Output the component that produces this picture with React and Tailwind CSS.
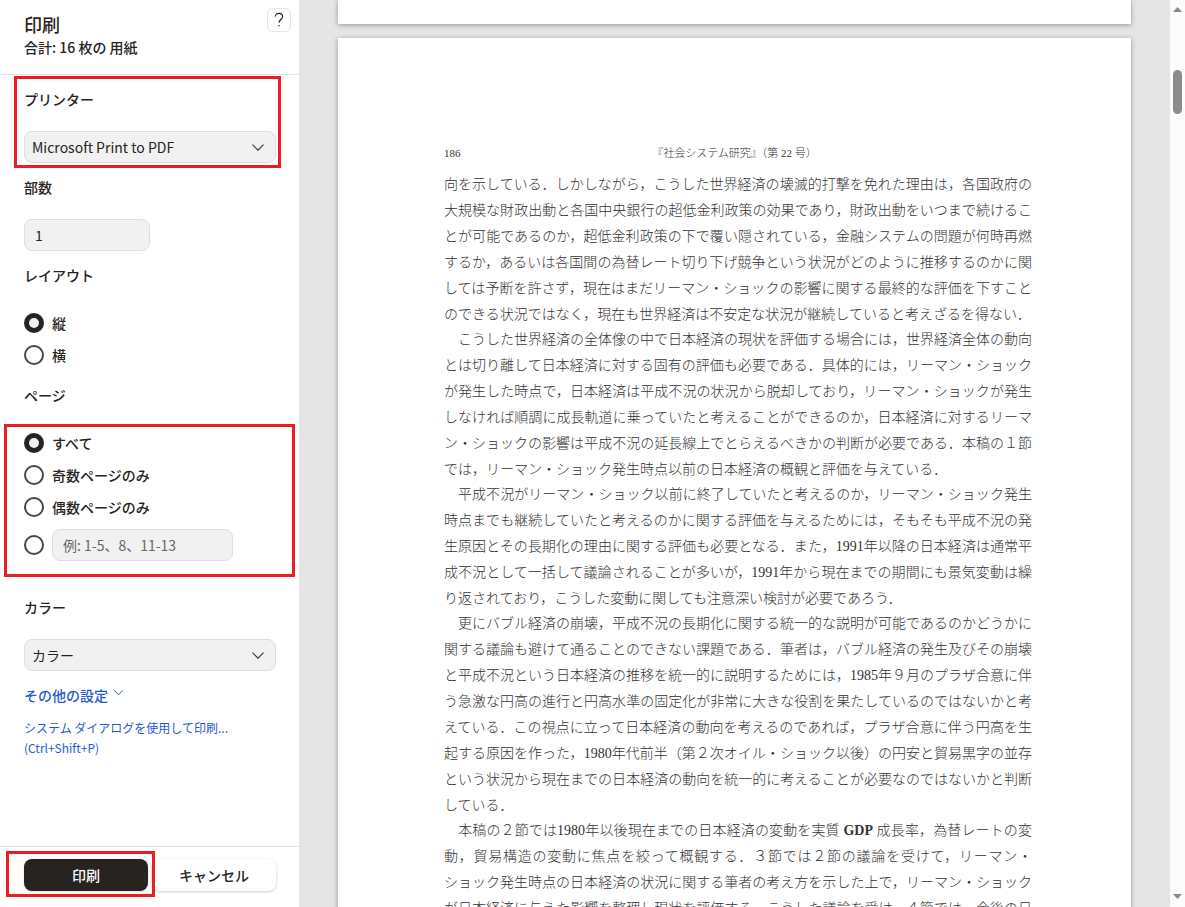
import React, { useState } from 'react';
import clsx from 'clsx';

const PAPER_TEXT = [
  [
    '向を示している．しかしながら，こうした世界経済の壊滅的打撃を免れた理由は，各国政府の',
    '大規模な財政出動と各国中央銀行の超低金利政策の効果であり，財政出動をいつまで続けるこ',
    'とが可能であるのか，超低金利政策の下で覆い隠されている，金融システムの問題が何時再燃',
    'するか，あるいは各国間の為替レート切り下げ競争という状況がどのように推移するのかに関',
    'しては予断を許さず，現在はまだリーマン・ショックの影響に関する最終的な評価を下すこと',
    'のできる状況ではなく，現在も世界経済は不安定な状況が継続していると考えざるを得ない．',
  ],
  [
    '　こうした世界経済の全体像の中で日本経済の現状を評価する場合には，世界経済全体の動向',
    'とは切り離して日本経済に対する固有の評価も必要である．具体的には，リーマン・ショック',
    'が発生した時点で，日本経済は平成不況の状況から脱却しており，リーマン・ショックが発生',
    'しなければ順調に成長軌道に乗っていたと考えることができるのか，日本経済に対するリーマ',
    'ン・ショックの影響は平成不況の延長線上でとらえるべきかの判断が必要である．本稿の１節',
    'では，リーマン・ショック発生時点以前の日本経済の概観と評価を与えている．',
  ],
  [
    '　平成不況がリーマン・ショック以前に終了していたと考えるのか，リーマン・ショック発生',
    '時点までも継続していたと考えるのかに関する評価を与えるためには，そもそも平成不況の発',
    '生原因とその長期化の理由に関する評価も必要となる．また，1991年以降の日本経済は通常平',
    '成不況として一括して議論されることが多いが，1991年から現在までの期間にも景気変動は繰',
    'り返されており，こうした変動に関しても注意深い検討が必要であろう．',
  ],
  [
    '　更にバブル経済の崩壊，平成不況の長期化に関する統一的な説明が可能であるのかどうかに',
    '関する議論も避けて通ることのできない課題である．筆者は，バブル経済の発生及びその崩壊',
    'と平成不況という日本経済の推移を統一的に説明するためには，1985年９月のプラザ合意に伴',
    'う急激な円高の進行と円高水準の固定化が非常に大きな役割を果たしているのではないかと考',
    'えている．この視点に立って日本経済の動向を考えるのであれば，プラザ合意に伴う円高を生',
    '起する原因を作った，1980年代前半（第２次オイル・ショック以後）の円安と貿易黒字の並存',
    'という状況から現在までの日本経済の動向を統一的に考えることが必要なのではないかと判断',
    'している．',
  ],
  [
    <>　本稿の２節では1980年以後現在までの日本経済の変動を実質 <b className="font-bold">GDP</b> 成長率，為替レートの変</>,
    '動，貿易構造の変動に焦点を絞って概観する．３節では２節の議論を受けて，リーマン・',
    'ショック発生時点の日本経済の状況に関する筆者の考え方を示した上で，リーマン・ショック',
    'が日本経済に与えた影響を整理し現状を評価する．こうした議論を受け，４節では，今後の日',
  ],
];

const PAGE_OPTIONS = [
  { id: 'all', label: 'すべて' },
  { id: 'odd', label: '奇数ページのみ' },
  { id: 'even', label: '偶数ページのみ' },
];

const LAYOUT_OPTIONS = [
  { id: 'portrait', label: '縦' },
  { id: 'landscape', label: '横' },
];

const titleClass = 'block pt-[14px] pb-[22px] text-sm leading-5 font-medium';
const fieldClass = 'h-8 rounded-lg border border-[#dedede] bg-[#f1f1f1] text-sm outline-none';

function Chevron({ className }) {
  return (
    <svg viewBox="0 0 12 7" fill="none" stroke="currentColor" className={className} aria-hidden="true">
      <path d="M0.5 0.7 L6 6.2 L11.5 0.7" />
    </svg>
  );
}

function Highlight({ className }) {
  return <span className={clsx('pointer-events-none absolute border-3 border-[#ed1c24]', className)} />;
}

function SelectField({ id, label, options }) {
  return (
    <>
      <label htmlFor={id} className={titleClass}>{label}</label>
      <div className="relative">
        <select id={id} className={clsx(fieldClass, 'w-full appearance-none pr-8 pl-[7px]')}>
          {options.map((option) => (
            <option key={option}>{option}</option>
          ))}
        </select>
        <Chevron className="pointer-events-none absolute top-[13px] right-3 w-3 stroke-[1.1] text-[#333]" />
      </div>
    </>
  );
}

function Radio({ ...props }) {
  return (
    <input
      type="radio"
      className="size-5 shrink-0 appearance-none rounded-full border-2 border-[#4a4542] bg-white checked:border-5 checked:border-[#272320] checked:bg-[#f1f1f1]"
      {...props}
    />
  );
}

function RadioRow({ label, ...props }) {
  return (
    <label className="flex h-8 items-center gap-2 text-sm font-medium">
      <Radio {...props} />
      {label}
    </label>
  );
}

function Sidebar() {
  const [layout, setLayout] = useState('portrait');
  const [pages, setPages] = useState('all');

  return (
    <aside className="flex w-[300px] shrink-0 flex-col border-r border-[#e5e5e5] bg-white font-['Noto_Sans_CJK_JP',sans-serif] text-[#272320]">
      {/* Header */}
      <header className="flex h-[75px] shrink-0 items-start justify-between border-b border-[#e5e5e5] pr-2 pl-6">
        <div className="pt-3">
          <h1 className="text-lg leading-6 font-medium">印刷</h1>
          <p className="mt-px text-sm leading-5 font-medium">合計: 16 枚の 用紙</p>
        </div>
        <button
          aria-label="ヘルプ"
          className="mt-2 flex size-6 items-center justify-center rounded-md border border-[#e5e5e5]"
        >
          <svg viewBox="0 0 10 16" fill="none" stroke="currentColor" className="h-4 w-[10px]">
            <path d="M1.4 4.5 C1.4 2.4 2.9 1.4 5 1.4 C7.1 1.4 8.6 2.6 8.6 4.5 C8.6 7.4 5 7.6 5 10.8" strokeWidth="1.1" />
            <circle cx="5" cy="13.8" r="0.8" fill="currentColor" stroke="none" />
          </svg>
        </button>
      </header>

      {/* Settings */}
      <div className="min-h-0 flex-1 pr-[23px] pl-6 whitespace-nowrap">
        <section className="relative">
          <SelectField id="printer" label="プリンター" options={['Microsoft Print to PDF']} />
          <Highlight className="top-px -right-[5px] -bottom-[5px] -left-[10px]" />
        </section>

        <section>
          <label htmlFor="copies" className={titleClass}>部数</label>
          <input id="copies" defaultValue="1" className={clsx(fieldClass, 'block w-1/2 px-[10px]')} />
        </section>

        <fieldset>
          <legend className={titleClass}>レイアウト</legend>
          {LAYOUT_OPTIONS.map((o) => (
            <RadioRow
              key={o.id}
              name="layout"
              label={o.label}
              checked={layout === o.id}
              onChange={() => setLayout(o.id)}
            />
          ))}
        </fieldset>

        <fieldset>
          <legend className={titleClass}>ページ</legend>
          <div className="relative">
            {PAGE_OPTIONS.map((o) => (
              <RadioRow
                key={o.id}
                name="pages"
                label={o.label}
                checked={pages === o.id}
                onChange={() => setPages(o.id)}
              />
            ))}
            <div className="mt-[6px] flex items-center gap-2">
              <Radio
                name="pages"
                aria-label="ページ範囲"
                checked={pages === 'custom'}
                onChange={() => setPages('custom')}
              />
              <input
                aria-label="印刷するページ"
                placeholder="例: 1-5、8、11-13"
                className={clsx(fieldClass, 'w-[181px] px-[10px] placeholder:text-[#6b6663]')}
              />
            </div>
            <Highlight className="-top-[3px] -right-[19px] -bottom-4 -left-5" />
          </div>
        </fieldset>

        <section className="mt-[22px]">
          <SelectField id="color" label="カラー" options={['カラー', '白黒']} />
        </section>

        <button className="mt-[14px] flex items-center gap-[6px] text-sm leading-5 font-medium text-[#1d5bd0]">
          その他の設定
          <Chevron className="mb-1 w-[9px] stroke-[1.3]" />
        </button>
        <a href="#system-dialog" className="mt-[13px] block text-xs leading-5 text-[#1d5bd0]">
          システム ダイアログを使用して印刷...
          <br />
          (Ctrl+Shift+P)
        </a>
      </div>

      {/* Actions */}
      <footer className="flex shrink-0 gap-1 border-t border-[#e5e5e5] pt-3 pr-[23px] pb-4 pl-6 text-sm font-medium">
        <div className="relative flex-1">
          <button className="h-8 w-full rounded-lg bg-[#272320] pb-px text-white shadow-sm">印刷</button>
          <Highlight className="-top-2 -right-[7px] -bottom-[6px] -left-[18px] z-10" />
        </div>
        <button className="h-8 flex-1 rounded-lg bg-white pb-px shadow-[0_1px_3px_rgba(0,0,0,0.2)]">キャンセル</button>
      </footer>
    </aside>
  );
}

function Preview() {
  return (
    <main className="min-w-0 flex-1 overflow-hidden bg-[#e5e5e5] pr-px font-['Liberation_Serif','Noto_Sans_CJK_JP',serif] text-[#333]">
      <div className="mx-auto h-6 max-w-[793px] bg-white shadow-[0_1px_5px_rgba(0,0,0,0.35)]" />
      <article className="mx-auto mt-[14px] max-w-[793px] bg-white pt-[105px] pr-[99px] pb-24 pl-[106px] shadow-[0_1px_5px_rgba(0,0,0,0.35)]">
        <header className="relative text-[11px] leading-5">
          <span>186</span>
          <span className="absolute left-0 w-[581px] text-center font-light">『社会システム研究』（第 22 号）</span>
        </header>
        <div className="mt-[9px] text-sm leading-[26px] font-light whitespace-nowrap">
          {PAPER_TEXT.map((lines, i) => (
            <p key={i} className={clsx(i > 0 && '-mt-px')}>
              {lines.map((line, j) => (
                <span
                  key={j}
                  className={clsx(
                    'block',
                    (j < lines.length - 1 || i === PAPER_TEXT.length - 1) && '[text-align-last:justify]'
                  )}
                >
                  {line}
                </span>
              ))}
            </p>
          ))}
        </div>
      </article>
    </main>
  );
}

function ScrollTrack() {
  return (
    <div className="flex w-[15px] shrink-0 flex-col items-center bg-[#fcfcfc] text-[#8b8b8b]">
      <svg viewBox="0 0 9 5" className="mt-[7px] h-[5px] w-[9px]" fill="currentColor">
        <path d="M0 5 L4.5 0 L9 5 Z" />
      </svg>
      <div className="mt-[58px] h-11 w-[9px] rounded-full bg-[#8b8b8b]" />
      <svg viewBox="0 0 9 5" className="mt-auto mb-2 h-[5px] w-[9px]" fill="currentColor">
        <path d="M0 0 L4.5 5 L9 0 Z" />
      </svg>
    </div>
  );
}

export default function App() {
  return (
    <div className="flex h-screen overflow-hidden">
      <Sidebar />
      <Preview />
      <ScrollTrack />
    </div>
  );
}
